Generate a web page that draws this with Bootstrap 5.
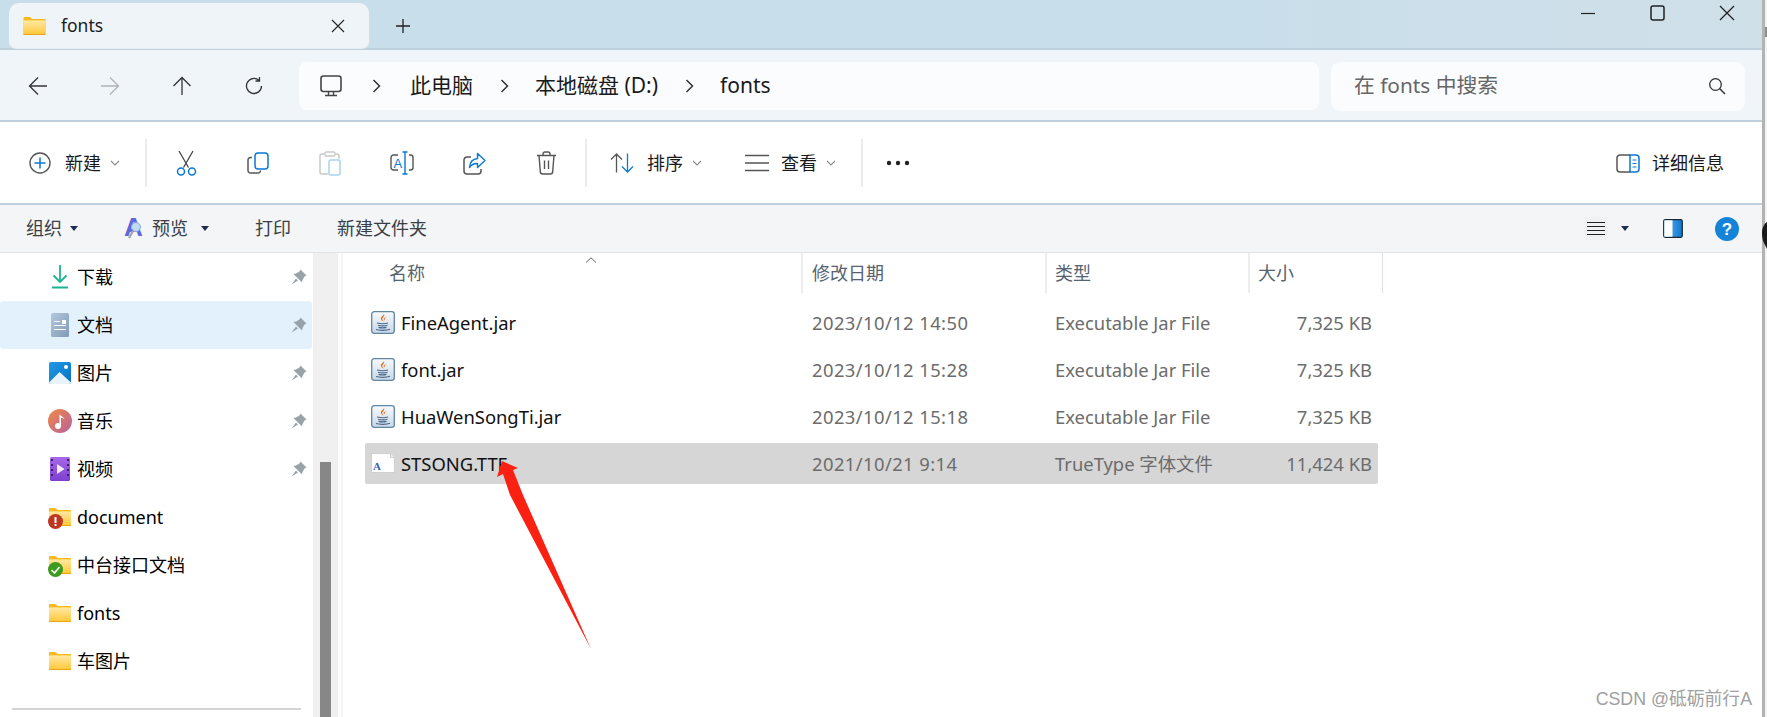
<!DOCTYPE html>
<html lang="zh-CN">
<head>
  <meta charset="UTF-8" />
  <title>fonts</title>
  <meta name="viewport" content="width=device-width, initial-scale=1.0">
  <link href="https://cdn.jsdelivr.net/npm/bootstrap@5.3.0/dist/css/bootstrap.min.css" rel="stylesheet" />
  <style>
    html, body { margin: 0; height: 100%; overflow: hidden; background: #fff; }
    body { font-family: "Noto Sans", "Noto Sans CJK SC", sans-serif; color: #1a1a1a; }
    svg { display: block; flex: none; }

    .win { width: 1762px; height: 717px; position: relative; }
    .win-edge { width: 3px; background: #b3b3b3; }
    .side-sliver { width: 2px; background: #f3f3f3; }
    .behind-bit { position: absolute; left: 1761px; top: 222px; }
    .behind-text { position: absolute; left: 1765px; top: 27px; width: 2px; height: 10px; background: #8d8d8d; }

    /* title bar */
    .title-bar { height: 50px; background: linear-gradient(90deg, #c9deeb 70%, #d0e0e9); border-bottom: 2px solid #bdd0dc; }
    .tab-item { width: 360px; height: 45px; margin: 3px 0 0 9px; padding: 0 24px 0 14px; background: #eff4f8; border-radius: 10px 10px 7px 7px; box-shadow: 0 1px 0 #e6edf2; font-size: 17.500px; }
    .tab-title { margin-left: 15px; line-height: 1; }
    .tab-plus { margin: 18px 0 0 26px; }
    .win-btns { margin: 5px 27px 0 0; gap: 54px; }

    /* nav row */
    .nav-row { height: 72px; padding-top: 2px; background: #f0f5f9; border-bottom: 2px solid #bdd0dc; }
    .nav-btn { width: 72px; }
    .nav-first { margin-left: 2px; }
    .path-box { width: 1020px; height: 48px; margin-left: 9px; padding-left: 21px; background: #fbfcfe; border-radius: 8px; font-size: 21px; }
    .path-sep { width: 68px; }
    .path-sep-b { width: 62px; }
    .search-box { width: 414px; height: 49px; margin-left: 12px; padding: 0 19px 0 23px; background: #fbfcfe; border-radius: 9px; font-size: 20.800px; color: #666; }

    /* command bar */
    .cmd-row { height: 83px; background: #fff; border-bottom: 2px solid #bdd0dc; font-size: 18px; padding-top: 1px; }
    .cmd-sep { width: 2px; height: 48px; background: #ebebeb; }
    .cmd-new { width: 145px; padding-left: 29px; }
    .cmd-btn { width: 72px; }
    .cmd-label { margin-left: 14px; line-height: 1; }
    .cmd-first { margin-left: 3px; }
    .cmd-sort { width: 145px; padding-left: 23px; }
    .cmd-view { width: 129px; padding-left: 13px; }
    .cmd-more { width: 70px; }
    .cmd-tail { margin-left: 9px; }
    .cmd-sort .cmd-label { margin-left: 13px; }
    .cmd-view .cmd-label { margin-left: 12px; }
    .details-btn { margin-right: 38px; }
    .details-btn .cmd-label { margin-left: 12px; }
    .cmd-gap-3 { margin-left: 3px; }

    /* menu row */
    .menu-row { height: 47px; background: #f4f5f7; font-size: 18px; color: #3a3f45; padding-left: 26px; }
    .menu-tail { margin-left: 8px; }
    .menu-preview { margin-left: 45px; }
    .preview-ico { margin: -4px 0 0; }
    .preview-text { margin-left: 7px; }
    .preview-tail { margin-left: 13px; }
    .menu-print { margin-left: 46px; }
    .menu-newdir { margin-left: 46px; }
    .menu-right { margin-right: 23px; }
    .menu-list { width: 24px; height: 23px; background: #f0f1f2; border-radius: 2px; }
    .menu-caret { margin-left: 13px; }
    .menu-pane { margin-left: 34px; }
    .menu-help { margin-left: 32px; }

    /* main split */
    .main-split { height: 465px; border-top: 1px solid #e2e2e2; }
    .side-pane { width: 313px; font-size: 18px; color: #000; }
    .side-row { height: 48px; padding: 0 6px 0 49px; }
    .side-row.is-current { background: #e2f1fc; border-radius: 3px; margin-right: 1px; padding-right: 5px; }
    .side-ico { width: 22px; margin-right: 6px; }
    .side-text { line-height: 1; }
    .side-rule { height: 2px; margin: 23px 12px 0; background: #d5d5d5; }
    .track { width: 25px; background: #f0f0f0; padding: 209px 7px 0; }
    .thumb { height: 100%; background: #878787; }
    .files-pane { margin-left: 3px; border-left: 2px solid #f5f5f5; width: 1421px; }

    /* file table */
    .col-name { width: 458px; }
    .col-date { width: 244px; }
    .col-kind { width: 203px; }
    .col-size { width: 135px; }
    .head-row { height: 40px; font-size: 18px; color: #566370; }
    .head-cell { height: 40px; padding-left: 8px; border-left: 2px solid #ededed; }
    .head-name { border-left: 0; padding-left: 46px; }
    .head-date { padding-left: 9px; }
    .sort-mark { margin: 4px 0 0 160px; }
    .file-list { padding: 9px 0 0 22px; }
    .file-row { width: 1013px; height: 41px; margin-bottom: 6px; font-size: 18.400px; color: #6c6c6c; border-radius: 2px; }
    .file-row.is-picked { background: #d6d6d6; }
    .file-name { width: 437px; padding-left: 6px; color: #111; }
    .file-name span { margin-left: 6px; }
    .file-date { width: 244px; padding-left: 10px; letter-spacing: .42px; }
    .file-kind { width: 203px; padding-left: 9px; }
    .file-size { width: 129px; padding-right: 6px; text-align: right; }

    .red-arrow { position: absolute; left: 490px; top: 455px; }
    .watermark { position: absolute; right: 10px; top: 687px; font-family: "Liberation Sans", "Noto Sans CJK SC", sans-serif; font-size: 17.800px; color: #a0a0a0; line-height: 24px; }
  </style>
</head>
<body>

<svg width="0" height="0" class="position-absolute">
  <defs>
    <linearGradient id="folderFill" x1="0" y1="0" x2="0" y2="1"><stop offset="0" stop-color="#ffe9a3"/><stop offset="1" stop-color="#ffc93f"/></linearGradient>
    <linearGradient id="boxFill" x1="0" y1="0" x2="0" y2="1"><stop offset="0" stop-color="#f8fafc"/><stop offset="1" stop-color="#c9d7e6"/></linearGradient>
    <linearGradient id="docFill" x1="0" y1="0" x2="1" y2="1"><stop offset="0" stop-color="#b5c8dc"/><stop offset="1" stop-color="#7f9ab8"/></linearGradient>
    <linearGradient id="picFill" x1="0" y1="0" x2="1" y2="1"><stop offset="0" stop-color="#1f9ae6"/><stop offset="1" stop-color="#0b6fc2"/></linearGradient>
    <linearGradient id="musicFill" x1="0" y1="0" x2="1" y2="1"><stop offset="0" stop-color="#f08a45"/><stop offset="1" stop-color="#b9609f"/></linearGradient>
    <linearGradient id="videoFill" x1="0" y1="0" x2="0" y2="1"><stop offset="0" stop-color="#a868e8"/><stop offset="1" stop-color="#7d3fd0"/></linearGradient>
    <linearGradient id="paneFill" x1="0" y1="0" x2="1" y2="0"><stop offset="0" stop-color="#5fb4ee"/><stop offset="1" stop-color="#0d78d0"/></linearGradient>
    <symbol id="folderIco" viewBox="0 0 22 18">
      <path d="M0 1.200C0 .5.5 0 1.200 0h5.200l2.400 2H22v15.500H0z" fill="#f6b91f"/>
      <path d="M0 3.400h22V17H0z" fill="url(#folderFill)"/>
      <path d="M0 17h22v1H0z" fill="#e9a514"/>
    </symbol>
    <symbol id="pinIco" viewBox="0 0 16 16">
      <path d="M9.500.5l6 6-2 1-2 3.500-.5 2.500L2.500 5 5 4.500l3.500-2zM5 9.500l2 2-6.500 4z" fill="#98a2aa"/>
    </symbol>
    <symbol id="jarIco" viewBox="0 0 24 23">
      <rect x=".7" y=".7" width="22.600" height="21.600" rx="2.500" fill="url(#boxFill)" stroke="#5f86a3" stroke-width="1.300"/>
      <path d="M13 3c1.400 2.400-3 3.700-1.300 6.300.4.600.9 1 1.200 1.400-3.400-1.500-3.600-3.800-1.800-5.400.9-.7 1.700-1.200 1.900-2.300z" fill="#e2681a"/>
      <path d="M16 6.200c-2 .7-3.200 1.500-2 3.300-1-.4-1.900-1.600-.8-2.500.7-.5 1.800-.8 2.800-.8z" fill="#e2681a"/>
      <path d="M6 12c3.600.8 8.500.8 11 0M7 14.300c3 .7 7 .7 9.500 0M7.500 16.400c2.500.6 5.800.6 8 0M5 18.600c3.500 1.100 10.400 1.100 14-.3" fill="none" stroke="#48698c" stroke-width="1.100"/>
    </symbol>
    <symbol id="chevDown" viewBox="0 0 10 6">
      <path d="M1 1l4 4 4-4" fill="none" stroke="#8a8a8a" stroke-width="1.100"/>
    </symbol>
    <symbol id="chevRight" viewBox="0 0 9 14">
      <path d="M1.500 1l6 6-6 6" fill="none" stroke="#333" stroke-width="1.500"/>
    </symbol>
    <symbol id="caretDown" viewBox="0 0 8 5">
      <path d="M0 0h8L4 5z" fill="#1d2f4d"/>
    </symbol>
  </defs>
</svg>

<div class="d-flex">
<div class="win d-flex flex-column">

  <div class="title-bar d-flex align-items-start">
    <div class="tab-item d-flex align-items-center">
      <svg width="23" height="18"><use href="#folderIco"/></svg>
      <span class="tab-title">fonts</span>
      <svg class="ms-auto" width="14" height="14" viewBox="0 0 14 14"><path d="M1 1l12 12M13 1L1 13" stroke="#2a2a2a" stroke-width="1.200"/></svg>
    </div>
    <svg class="tab-plus" width="16" height="16" viewBox="0 0 16 16"><path d="M8 1v14M1 8h14" stroke="#222" stroke-width="1.300"/></svg>
    <div class="win-btns d-flex align-items-center ms-auto">
      <svg width="16" height="15" viewBox="0 0 16 15"><path d="M1 7.500h14" stroke="#222" stroke-width="1.200"/></svg>
      <svg width="15" height="16" viewBox="0 0 15 16"><rect x="1" y="1" width="13" height="14" rx="2" fill="none" stroke="#222" stroke-width="1.500"/></svg>
      <svg width="16" height="16" viewBox="0 0 16 16"><path d="M1 1l14 14M15 1L1 15" stroke="#222" stroke-width="1.300"/></svg>
    </div>
  </div>

  <div class="nav-row d-flex align-items-center">
    <div class="nav-btn nav-first d-flex justify-content-center">
      <svg width="20" height="20" viewBox="0 0 20 20"><path d="M19 10H1.500M10 1.500L1.500 10l8.500 8.500" fill="none" stroke="#333" stroke-width="1.300"/></svg>
    </div>
    <div class="nav-btn d-flex justify-content-center">
      <svg width="20" height="20" viewBox="0 0 20 20"><path d="M1 10h17.500M10 1.500l8.500 8.500-8.500 8.500" fill="none" stroke="#b0b4b8" stroke-width="1.300"/></svg>
    </div>
    <div class="nav-btn d-flex justify-content-center">
      <svg width="20" height="20" viewBox="0 0 20 20"><path d="M10 19V1.500M1.500 10L10 1.500l8.500 8.500" fill="none" stroke="#333" stroke-width="1.300"/></svg>
    </div>
    <div class="nav-btn d-flex justify-content-center">
      <svg width="20" height="20" viewBox="0 0 20 20"><path d="M17.500 10a7.500 7.500 0 1 1-2.600-5.700M15.500 1v4h-4" fill="none" stroke="#333" stroke-width="1.300"/></svg>
    </div>
    <div class="path-box d-flex align-items-center">
      <svg width="22" height="22" viewBox="0 0 22 22"><rect x="1" y="1" width="20" height="15.500" rx="2.500" fill="none" stroke="#444" stroke-width="1.600"/><path d="M8.500 17v3M13.500 17v3M5 20.500h12" stroke="#444" stroke-width="1.400"/></svg>
      <div class="path-sep d-flex justify-content-center"><svg width="9" height="14"><use href="#chevRight"/></svg></div>
      <span>此电脑</span>
      <div class="path-sep-b d-flex justify-content-center"><svg width="9" height="14"><use href="#chevRight"/></svg></div>
      <span>本地磁盘 (D:)</span>
      <div class="path-sep-b d-flex justify-content-center"><svg width="9" height="14"><use href="#chevRight"/></svg></div>
      <span>fonts</span>
    </div>
    <div class="search-box d-flex align-items-center justify-content-between">
      <span>在 fonts 中搜索</span>
      <svg width="18" height="18" viewBox="0 0 18 18"><circle cx="7.500" cy="7.500" r="5.800" fill="none" stroke="#333" stroke-width="1.300"/><path d="M11.800 11.800l5.200 5.200" stroke="#333" stroke-width="1.500"/></svg>
    </div>
  </div>

  <div class="cmd-row d-flex align-items-center">
    <div class="cmd-new d-flex align-items-center">
      <svg width="22" height="22" viewBox="0 0 22 22"><circle cx="11" cy="11" r="10" fill="none" stroke="#555" stroke-width="1.400"/><path d="M11 5.500v11M5.500 11h11" stroke="#0a78d4" stroke-width="1.500"/></svg>
      <span class="cmd-label">新建</span>
      <svg class="cmd-tail" width="10" height="6"><use href="#chevDown"/></svg>
    </div>
    <div class="cmd-sep"></div>
    <div class="cmd-btn cmd-first d-flex justify-content-center">
      <svg width="21" height="26" viewBox="0 0 21 26"><path d="M3 1l9.500 16.500M17 1L7.500 17.500" fill="none" stroke="#444" stroke-width="1.300"/><circle cx="5" cy="21.500" r="3.500" fill="none" stroke="#0a78d4" stroke-width="1.500"/><circle cx="16" cy="21.500" r="3.500" fill="none" stroke="#0a78d4" stroke-width="1.500"/></svg>
    </div>
    <div class="cmd-btn d-flex justify-content-center">
      <svg width="22" height="22" viewBox="0 0 22 22"><path d="M5 5.500H3.500A2.500 2.500 0 0 0 1 8v10.500A2.500 2.500 0 0 0 3.500 21H11a2.500 2.500 0 0 0 2.500-2.500" fill="none" stroke="#555" stroke-width="1.500"/><rect x="8" y="1" width="13" height="16" rx="3" fill="#fff" stroke="#0a78d4" stroke-width="1.500"/></svg>
    </div>
    <div class="cmd-btn d-flex justify-content-center">
      <svg width="22" height="25" viewBox="0 0 22 25"><path d="M6 3H3a2 2 0 0 0-2 2v16a2 2 0 0 0 2 2h6M16 3h2a2 2 0 0 1 2 2v3" fill="none" stroke="#c9c9c9" stroke-width="1.500"/><rect x="6" y="1" width="10" height="4" rx="1" fill="#fff" stroke="#c9c9c9" stroke-width="1.300"/><rect x="10" y="9" width="11" height="15" rx="2" fill="#fff" stroke="#a8d2f2" stroke-width="1.500"/></svg>
    </div>
    <div class="cmd-btn d-flex justify-content-center">
      <svg width="24" height="24" viewBox="0 0 24 24"><path d="M8 4H3.500A2.500 2.500 0 0 0 1 6.500v10A2.500 2.500 0 0 0 3.500 19H8M19 4h1.500A2.500 2.500 0 0 1 23 6.500v10a2.500 2.500 0 0 1-2.500 2.500H19" fill="none" stroke="#555" stroke-width="1.400"/><path d="M15 1v22M12.500 1h5M12.500 23h5" stroke="#0a78d4" stroke-width="1.400"/><text x="3.500" y="16.500" font-family="Liberation Sans" font-size="13" fill="#0a78d4">A</text></svg>
    </div>
    <div class="cmd-btn d-flex justify-content-center">
      <svg width="23" height="23" viewBox="0 0 23 23"><path d="M8 5H4a3 3 0 0 0-3 3v11a3 3 0 0 0 3 3h11a3 3 0 0 0 3-3v-2" fill="none" stroke="#555" stroke-width="1.500"/><path d="M14.500 1.500L22 8.500l-7.500 7v-4c-3.500-.2-6 1-8 4 .3-5 3-8.500 8-9z" fill="#fff" stroke="#0a78d4" stroke-width="1.400" stroke-linejoin="round"/></svg>
    </div>
    <div class="cmd-btn d-flex justify-content-center">
      <svg width="21" height="24" viewBox="0 0 21 24"><path d="M1 4.500h19M7 4.500V3a2 2 0 0 1 2-2h3a2 2 0 0 1 2 2v1.500M3 4.500l1.300 16a2.500 2.500 0 0 0 2.500 2.500h7.400a2.500 2.500 0 0 0 2.500-2.500l1.300-16M8.500 9.500v8.500M12.500 9.500v8.500" fill="none" stroke="#555" stroke-width="1.400"/></svg>
    </div>
    <div class="cmd-sep cmd-gap-3"></div>
    <div class="cmd-sort d-flex align-items-center">
      <svg width="24" height="20" viewBox="0 0 24 20"><path d="M6.500 19.500V1M1 6.500L6.500 1 12 6.500" fill="none" stroke="#555" stroke-width="1.300"/><path d="M17.500 .5V19M12 13.500l5.500 5.500 5.500-5.500" fill="none" stroke="#0a78d4" stroke-width="1.300"/></svg>
      <span class="cmd-label">排序</span>
      <svg class="cmd-tail" width="10" height="6"><use href="#chevDown"/></svg>
    </div>
    <div class="cmd-view d-flex align-items-center">
      <svg width="24" height="18" viewBox="0 0 24 18"><path d="M0 1.500h24M0 9h24M0 16.500h24" stroke="#555" stroke-width="1.400"/></svg>
      <span class="cmd-label">查看</span>
      <svg class="cmd-tail" width="10" height="6"><use href="#chevDown"/></svg>
    </div>
    <div class="cmd-sep"></div>
    <div class="cmd-more d-flex justify-content-center">
      <svg width="24" height="6" viewBox="0 0 24 6"><circle cx="3" cy="3" r="2.200" fill="#222"/><circle cx="12" cy="3" r="2.200" fill="#222"/><circle cx="21" cy="3" r="2.200" fill="#222"/></svg>
    </div>
    <div class="details-btn d-flex align-items-center ms-auto">
      <svg width="24" height="19" viewBox="0 0 24 19"><path d="M14 1H4a3 3 0 0 0-3 3v11a3 3 0 0 0 3 3h10" fill="none" stroke="#555" stroke-width="1.500"/><path d="M14 1h6a3 3 0 0 1 3 3v11a3 3 0 0 1-3 3h-6z" fill="#fff" stroke="#0a78d4" stroke-width="1.500"/><path d="M16.500 6h4M16.500 9.500h4M16.500 13h4" stroke="#0a78d4" stroke-width="1.200"/></svg>
      <span class="cmd-label">详细信息</span>
    </div>
  </div>

  <div class="menu-row d-flex align-items-center">
    <span>组织</span>
    <svg class="menu-tail" width="8" height="5"><use href="#caretDown"/></svg>
    <div class="menu-preview d-flex align-items-center">
      <svg class="preview-ico" width="22" height="30" viewBox="0 0 22 30"><text x="1" y="24" font-family="Liberation Sans" font-weight="700" font-size="26" fill="#5f66dc">A</text><circle cx="13" cy="15" r="4.500" fill="#bcdcf2" stroke="#8fa8d8"/><path d="M10 19l-4 7" stroke="#a3a3ab" stroke-width="2.200"/></svg>
      <span class="preview-text">预览</span>
      <svg class="preview-tail" width="8" height="5"><use href="#caretDown"/></svg>
    </div>
    <span class="menu-print">打印</span>
    <span class="menu-newdir">新建文件夹</span>
    <div class="menu-right d-flex align-items-center ms-auto">
      <div class="menu-list d-flex align-items-center justify-content-center">
        <svg width="18" height="14" viewBox="0 0 18 14"><path d="M0 .5h18M0 4.500h18M0 8.500h18M0 12.500h18" stroke="#222" stroke-width="1"/></svg>
      </div>
      <svg class="menu-caret" width="8" height="5"><use href="#caretDown"/></svg>
      <svg class="menu-pane" width="20" height="19" viewBox="0 0 20 19"><rect x=".7" y=".7" width="18.600" height="17.600" rx="1.500" fill="url(#paneFill)" stroke="#1c2733" stroke-width="1.200"/><path d="M1.300 1.300h8.200v16.400H1.300z" fill="#fff"/></svg>
      <svg class="menu-help" width="24" height="24" viewBox="0 0 24 24"><circle cx="12" cy="12" r="12" fill="#1483d8"/><text x="12" y="18" text-anchor="middle" font-family="Liberation Sans" font-weight="700" font-size="17" fill="#fff">?</text></svg>
    </div>
  </div>

  <div class="main-split d-flex">
    <div class="side-pane">
      <div class="side-row d-flex align-items-center">
        <div class="side-ico d-flex justify-content-center"><svg width="16" height="24" viewBox="0 0 16 24"><path d="M8 0v17M1.500 10.500L8 17l6.500-6.500" fill="none" stroke="#1cb58e" stroke-width="1.800"/><path d="M0 22.500h16" stroke="#18b295" stroke-width="2"/></svg></div>
        <span class="side-text">下载</span>
        <svg class="ms-auto" width="16" height="16"><use href="#pinIco"/></svg>
      </div>
      <div class="side-row is-current d-flex align-items-center">
        <div class="side-ico d-flex justify-content-center"><svg width="18" height="24" viewBox="0 0 18 24"><rect width="18" height="24" rx="1.500" fill="url(#docFill)"/><rect x="11" y="7" width="4" height="4" fill="#fff"/><path d="M3 8.500h6M3 12.500h12M3 16.500h12" stroke="#fff" stroke-width="1.100"/></svg></div>
        <span class="side-text">文档</span>
        <svg class="ms-auto" width="16" height="16"><use href="#pinIco"/></svg>
      </div>
      <div class="side-row d-flex align-items-center">
        <div class="side-ico d-flex justify-content-center"><svg width="22" height="22" viewBox="0 0 22 22"><rect width="22" height="22" rx="2" fill="url(#picFill)"/><path d="M0 20.500L10.500 10 22 20.500V20a2 2 0 0 1-2 2H2a2 2 0 0 1-2-2z" fill="#e9f3fb"/><circle cx="17" cy="5" r="2" fill="#fff"/></svg></div>
        <span class="side-text">图片</span>
        <svg class="ms-auto" width="16" height="16"><use href="#pinIco"/></svg>
      </div>
      <div class="side-row d-flex align-items-center">
        <div class="side-ico d-flex justify-content-center"><svg width="24" height="24" viewBox="0 0 24 24"><circle cx="12" cy="12" r="12" fill="url(#musicFill)"/><circle cx="10" cy="17" r="3" fill="#fff"/><path d="M11.500 17V5.500c2 2 4 2.500 5 4.500-1.500-1-2.300-1.200-3.500-1.300V17z" fill="#fff"/></svg></div>
        <span class="side-text">音乐</span>
        <svg class="ms-auto" width="16" height="16"><use href="#pinIco"/></svg>
      </div>
      <div class="side-row d-flex align-items-center">
        <div class="side-ico d-flex justify-content-center"><svg width="20" height="24" viewBox="0 0 20 24"><rect width="20" height="24" rx="1.500" fill="url(#videoFill)"/><path d="M1 2h2v2H1zM1 7h2v2H1zM1 12h2v2H1zM1 17h2v2H1zM17 2h2v2h-2zM17 7h2v2h-2zM17 12h2v2h-2zM17 17h2v2h-2z" fill="#3d1d7a"/><path d="M7 7l7.500 5L7 17z" fill="#f3ecfd"/></svg></div>
        <span class="side-text">视频</span>
        <svg class="ms-auto" width="16" height="16"><use href="#pinIco"/></svg>
      </div>
      <div class="side-row d-flex align-items-center">
        <div class="side-ico position-relative"><svg width="22" height="18"><use href="#folderIco"/></svg>
          <svg class="position-absolute" style="left:-1px;top:6px" width="15" height="15" viewBox="0 0 15 15"><circle cx="7.500" cy="7.500" r="7.500" fill="#bf3720"/><rect x="6.500" y="3" width="2" height="6" fill="#fff"/><rect x="6.500" y="10" width="2" height="2" fill="#fff"/></svg>
        </div>
        <span class="side-text">document</span>
      </div>
      <div class="side-row d-flex align-items-center">
        <div class="side-ico position-relative"><svg width="22" height="18"><use href="#folderIco"/></svg>
          <svg class="position-absolute" style="left:-1px;top:6px" width="15" height="15" viewBox="0 0 15 15"><circle cx="7.500" cy="7.500" r="7.500" fill="#3c9a1c"/><path d="M3.500 8l3 3 5-6" fill="none" stroke="#fff" stroke-width="1.700"/></svg>
        </div>
        <span class="side-text">中台接口文档</span>
      </div>
      <div class="side-row d-flex align-items-center">
        <div class="side-ico"><svg width="22" height="18"><use href="#folderIco"/></svg></div>
        <span class="side-text">fonts</span>
      </div>
      <div class="side-row d-flex align-items-center">
        <div class="side-ico"><svg width="22" height="18"><use href="#folderIco"/></svg></div>
        <span class="side-text">车图片</span>
      </div>
      <div class="side-rule"></div>
    </div>
    <div class="track"><div class="thumb"></div></div>
    <div class="files-pane">
      <div class="head-row d-flex">
        <div class="head-cell head-name col-name d-flex align-items-center">
          <span>名称</span>
          <svg class="sort-mark align-self-start" width="12" height="6" viewBox="0 0 12 6"><path d="M1 5.500L6 .8l5 4.700" fill="none" stroke="#666" stroke-width="1"/></svg>
        </div>
        <div class="head-cell head-date col-date d-flex align-items-center">修改日期</div>
        <div class="head-cell col-kind d-flex align-items-center">类型</div>
        <div class="head-cell col-size d-flex align-items-center border-end">大小</div>
      </div>
      <div class="file-list">
        <div class="file-row d-flex align-items-center">
          <div class="file-name d-flex align-items-center"><svg width="24" height="23"><use href="#jarIco"/></svg><span>FineAgent.jar</span></div>
          <div class="file-date">2023/10/12 14:50</div>
          <div class="file-kind">Executable Jar File</div>
          <div class="file-size">7,325 KB</div>
        </div>
        <div class="file-row d-flex align-items-center">
          <div class="file-name d-flex align-items-center"><svg width="24" height="23"><use href="#jarIco"/></svg><span>font.jar</span></div>
          <div class="file-date">2023/10/12 15:28</div>
          <div class="file-kind">Executable Jar File</div>
          <div class="file-size">7,325 KB</div>
        </div>
        <div class="file-row d-flex align-items-center">
          <div class="file-name d-flex align-items-center"><svg width="24" height="23"><use href="#jarIco"/></svg><span>HuaWenSongTi.jar</span></div>
          <div class="file-date">2023/10/12 15:18</div>
          <div class="file-kind">Executable Jar File</div>
          <div class="file-size">7,325 KB</div>
        </div>
        <div class="file-row is-picked d-flex align-items-center">
          <div class="file-name d-flex align-items-center">
            <svg width="24" height="20" viewBox="0 0 24 20"><path d="M.5.5h19l4 4v15H.5z" fill="#fff" stroke="#d0d0d0"/><path d="M19.500.5v4h4" fill="#eee" stroke="#d0d0d0"/><text x="2" y="17" font-family="Liberation Serif" font-weight="700" font-size="11" fill="#3c5fc0">A</text></svg>
            <span>STSONG.TTF</span>
          </div>
          <div class="file-date">2021/10/21 9:14</div>
          <div class="file-kind">TrueType 字体文件</div>
          <div class="file-size">11,424 KB</div>
        </div>
      </div>
    </div>
  </div>

  <svg class="red-arrow" width="110" height="200" viewBox="490 455 110 200">
    <path d="M502 461L518 468 513 470 523 495 591 649 510 495 503 474 497 477z" fill="#fb2112"/>
  </svg>
  <div class="watermark">CSDN @砥砺前行A</div>
</div>
<div class="win-edge"></div>
<div class="side-sliver"></div>
</div>

<div class="behind-text"></div>
<svg class="behind-bit" width="6" height="28" viewBox="0 0 6 28"><path d="M6 0C3 2 1 6 1 11s1 9 3 12l2 4z" fill="#1b1b1b"/></svg>

<script src="https://cdn.jsdelivr.net/npm/bootstrap@5.3.0/dist/js/bootstrap.bundle.min.js"></script>
</body>
</html>
